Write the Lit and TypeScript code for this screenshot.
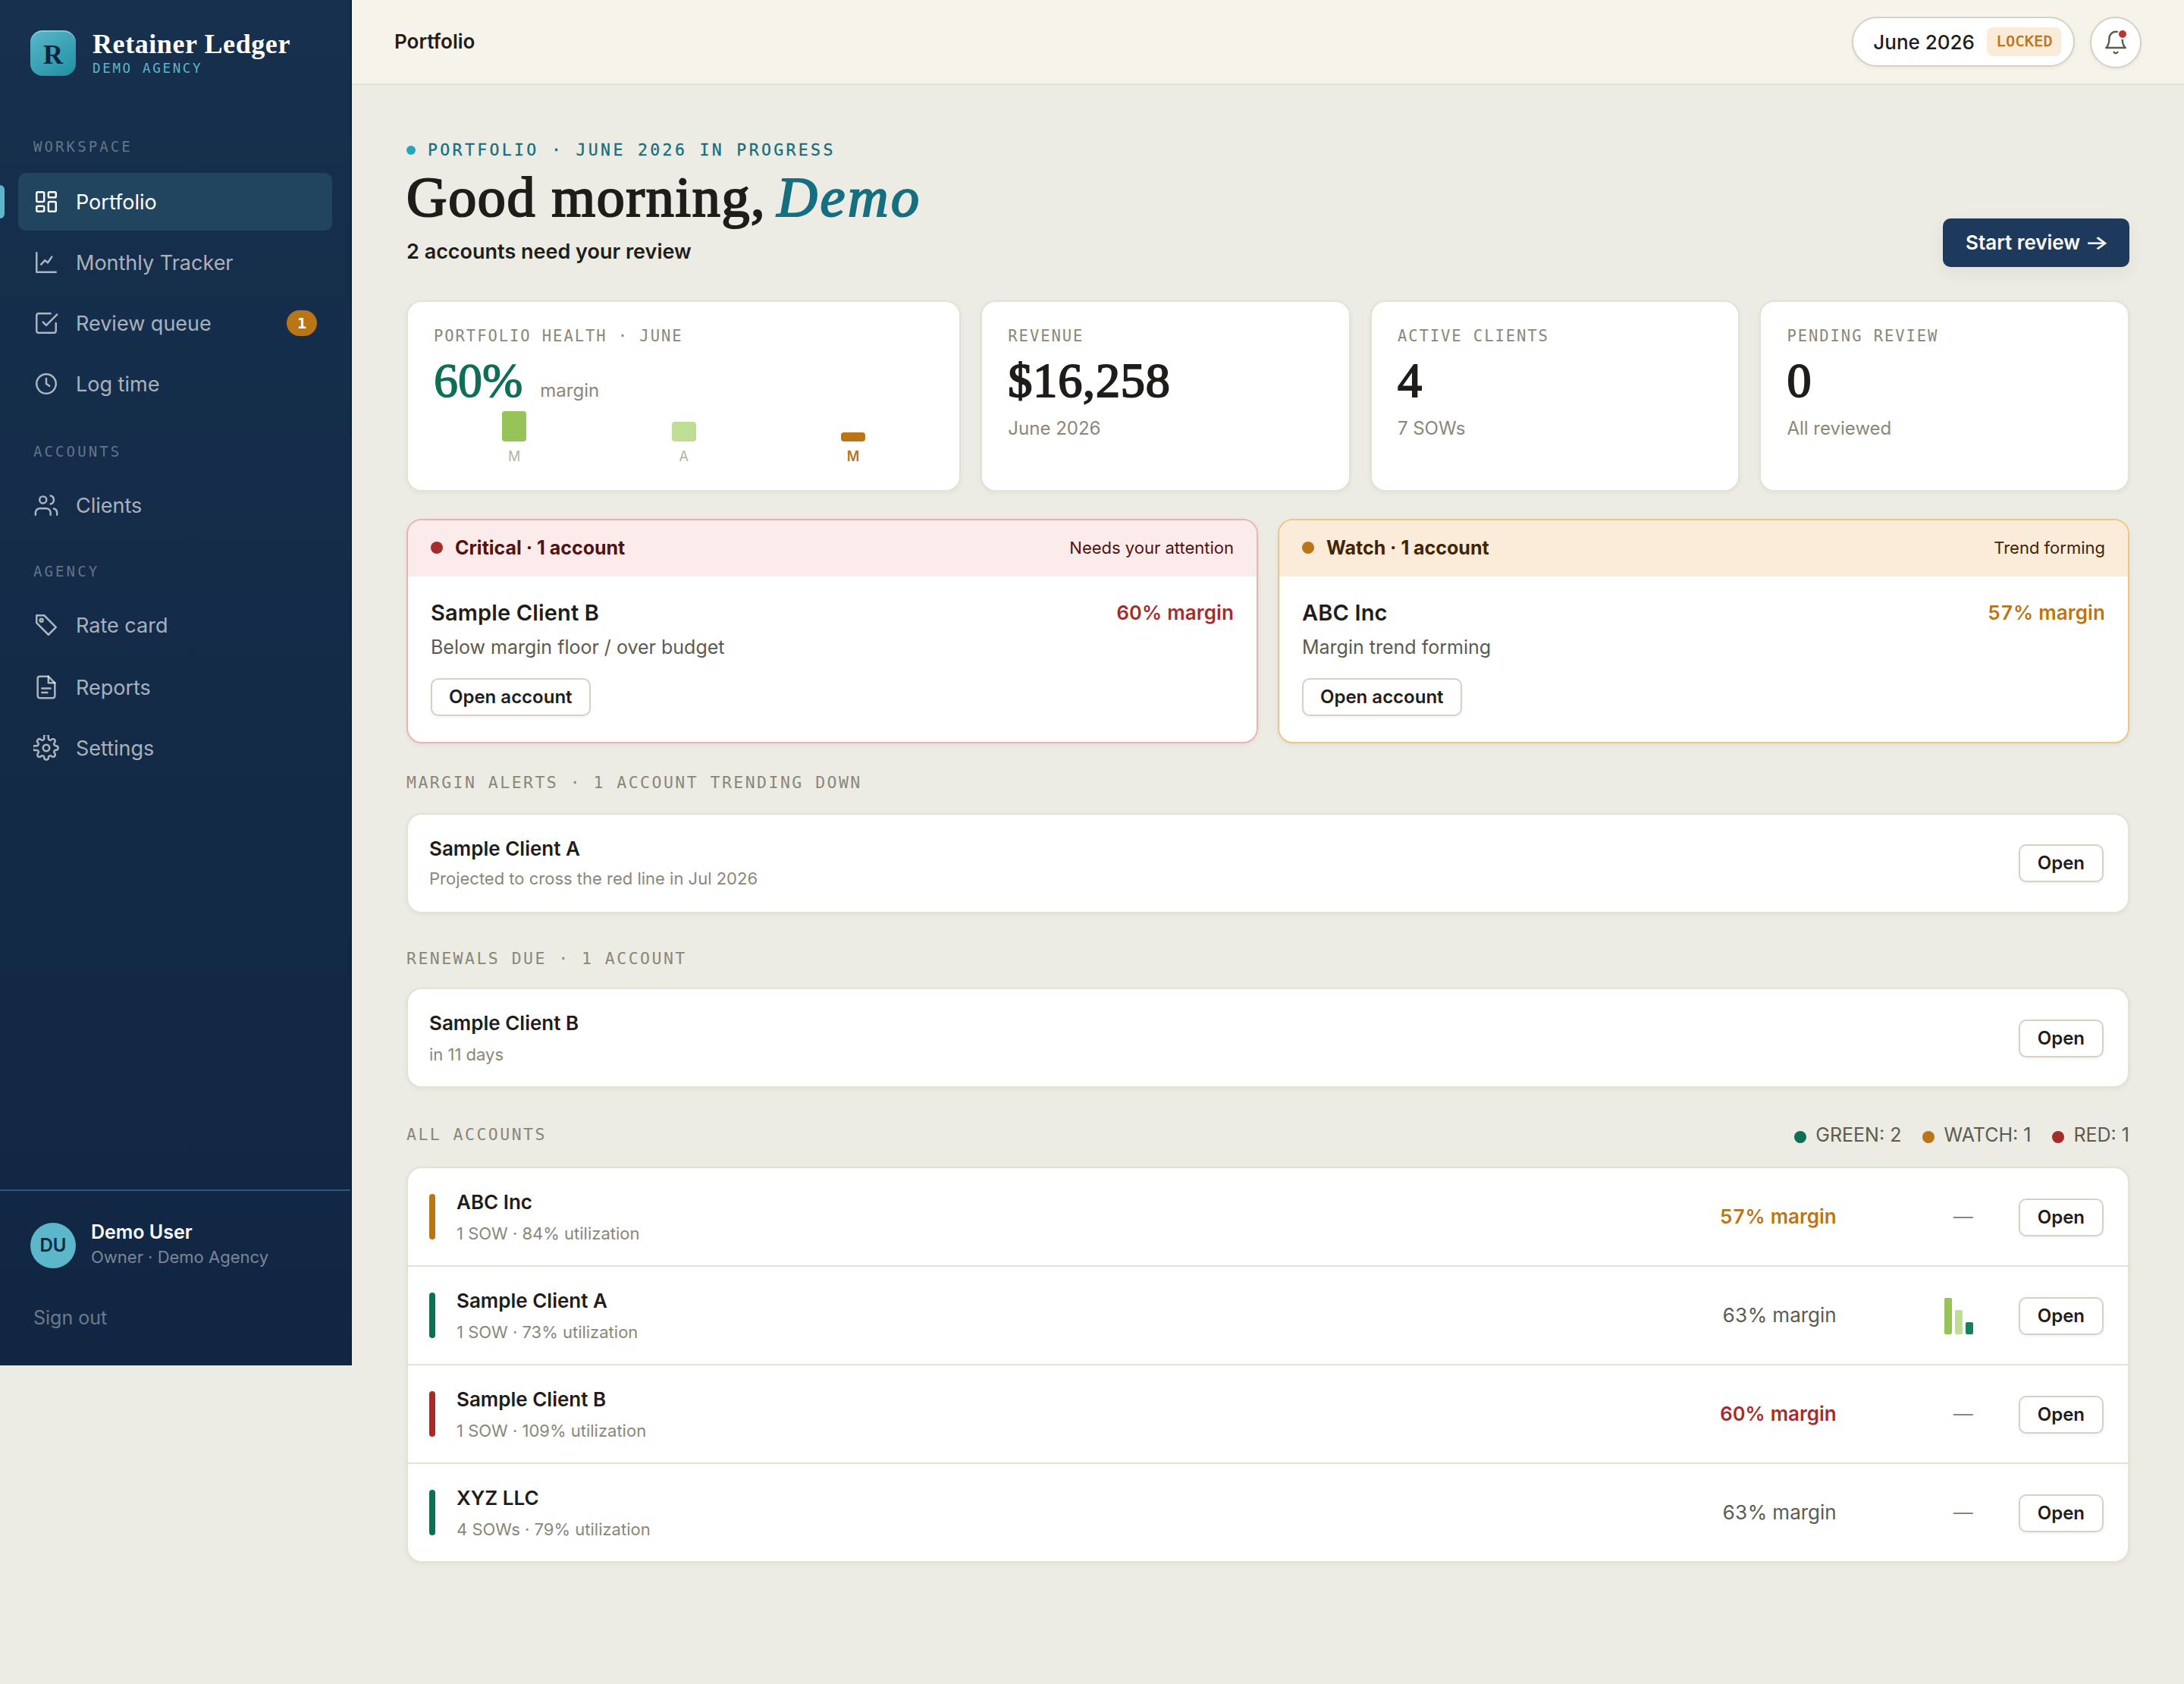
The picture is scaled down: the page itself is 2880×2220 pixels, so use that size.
import { LitElement, html, css, svg } from 'lit';
import { customElement, property } from 'lit/decorators.js';
import { classMap } from 'lit/directives/class-map.js';
import { styleMap } from 'lit/directives/style-map.js';

const icons: Record<string, unknown> = {
  dashboard: svg`
    <rect x="3" y="3" width="7" height="9" rx="1"/>
    <rect x="14" y="3" width="7" height="5" rx="1"/>
    <rect x="14" y="12" width="7" height="9" rx="1"/>
    <rect x="3" y="16" width="7" height="5" rx="1"/>`,
  chart: svg`
    <path d="M3 3v18h18"/>
    <path d="M7.2 13.8l3.6-3.8 2.6 2.2L17.2 6.8"/>`,
  check: svg`
    <path d="M9 11l3 3L22 4"/>
    <path d="M21 12v7a2 2 0 0 1-2 2H5a2 2 0 0 1-2-2V5a2 2 0 0 1 2-2h11"/>`,
  clock: svg`
    <circle cx="12" cy="12" r="9"/>
    <path d="M12 7v5l3 2"/>`,
  users: svg`
    <path d="M16 21v-2a4 4 0 0 0-4-4H6a4 4 0 0 0-4 4v2"/>
    <circle cx="9" cy="7" r="3.2"/>
    <path d="M22 21v-2a4 4 0 0 0-3-3.87"/>
    <path d="M16 3.13a4 4 0 0 1 0 7.75"/>`,
  tag: svg`
    <path d="M3 3h7l11 11-7 7L3 10z"/>
    <circle cx="7.5" cy="7.5" r="1.4"/>`,
  file: svg`
    <path d="M14 2H6a2 2 0 0 0-2 2v16a2 2 0 0 0 2 2h12a2 2 0 0 0 2-2V8z"/>
    <path d="M14 2v6h6"/>
    <path d="M8 13h8M8 17h5"/>`,
  gear: svg`
    <circle cx="12" cy="12" r="3"/>
    <path d="M19.4 15a1.65 1.65 0 0 0 .33 1.82l.06.06a2 2 0 1 1-2.83 2.83l-.06-.06a1.65 1.65 0 0 0-1.82-.33 1.65 1.65 0 0 0-1 1.51V21a2 2 0 0 1-4 0v-.09A1.65 1.65 0 0 0 9 19.4a1.65 1.65 0 0 0-1.82.33l-.06.06a2 2 0 1 1-2.83-2.83l.06-.06a1.65 1.65 0 0 0 .33-1.82 1.65 1.65 0 0 0-1.51-1H1.2a2 2 0 0 1 0-4h1.89A1.65 1.65 0 0 0 4.6 9a1.65 1.65 0 0 0-.33-1.82l-.06-.06a2 2 0 1 1 2.83-2.83l.06.06a1.65 1.65 0 0 0 1.82.33H9a1.65 1.65 0 0 0 1-1.51V1.2a2 2 0 0 1 4 0v1.89a1.65 1.65 0 0 0 1 1.51 1.65 1.65 0 0 0 1.82-.33l.06-.06a2 2 0 1 1 2.83 2.83l-.06.06a1.65 1.65 0 0 0-.33 1.82V9a1.65 1.65 0 0 0 1.51 1H21a2 2 0 0 1 0 4h-.09a1.65 1.65 0 0 0-1.51 1z"/>`,
  bell: svg`
    <path d="M6 8a6 6 0 0 1 12 0c0 7 3 9 3 9H3s3-2 3-9"/>
    <path d="M10.3 21a1.94 1.94 0 0 0 3.4 0"/>`,
};

const icon = (name: string) => html`
  <svg class="icon" viewBox="0 0 24 24" fill="none" stroke="currentColor" stroke-width="1.75"
    stroke-linecap="round" stroke-linejoin="round">${icons[name]}</svg>
`;

const base = css`
  :host {
    display: block;
    --serif: "Liberation Serif", "Times New Roman", serif;
    --mono: "DejaVu Sans Mono", monospace;
    --ink: #1e1d1a;
    --ink-2: #5c5b50;
    --ink-3: #8a877a;
    --line: #e4e1d5;
    --line-strong: #d5d2c4;
    --green: #0f6e56;
    --amber: #ba7517;
    --red: #a32d2d;
  }
  * {
    box-sizing: border-box;
  }
  .icon {
    display: block;
    flex: none;
    width: 34px;
    height: 34px;
  }
  .btn {
    display: inline-flex;
    align-items: center;
    justify-content: center;
    height: 50px;
    padding: 0 23px;
    border: 2px solid var(--line-strong);
    border-radius: 10px;
    background: #fff;
    box-shadow: 0 2px 4px rgba(30, 29, 26, 0.05);
    color: var(--ink);
    font: 600 24px/1 Inter, sans-serif;
    white-space: nowrap;
  }
`;

interface NavItem {
  label: string;
  icon: string;
  active?: boolean;
  badge?: number;
}

const nav: { title: string; items: NavItem[] }[] = [
  {
    title: 'WORKSPACE',
    items: [
      { label: 'Portfolio', icon: 'dashboard', active: true },
      { label: 'Monthly Tracker', icon: 'chart' },
      { label: 'Review queue', icon: 'check', badge: 1 },
      { label: 'Log time', icon: 'clock' },
    ],
  },
  { title: 'ACCOUNTS', items: [{ label: 'Clients', icon: 'users' }] },
  {
    title: 'AGENCY',
    items: [
      { label: 'Rate card', icon: 'tag' },
      { label: 'Reports', icon: 'file' },
      { label: 'Settings', icon: 'gear' },
    ],
  },
];

@customElement('ledger-sidebar')
class LedgerSidebar extends LitElement {
  static styles = [base, css`
    :host {
      display: flex;
      flex-direction: column;
      width: 464px;
      height: 1800px;
      border-right: 2px solid #0b2140;
      background: linear-gradient(180deg, #16304d, #112642);
      color: rgba(255, 255, 255, 0.65);
    }
    .brand {
      display: flex;
      gap: 22px;
      padding: 40px 40px 0;
    }
    .logo {
      display: flex;
      align-items: center;
      justify-content: center;
      width: 60px;
      height: 60px;
      border-radius: 16px;
      background: linear-gradient(145deg, #5bb7c9, #1f8fa3);
      box-shadow: inset 0 2px 0 rgba(255, 255, 255, 0.3);
      color: #0b2440;
      font: 700 36px/1 var(--serif);
      padding-top: 4px;
    }
    .name {
      color: #fff;
      font: 700 36px/36px var(--serif);
      letter-spacing: 0.58px;
    }
    .org {
      margin-top: 4px;
      color: #5bb7c9;
      font: 400 17.5px/20px var(--mono);
      letter-spacing: 2.67px;
    }
    .group {
      padding: 0 24px;
      margin-top: 26px;
    }
    .group:first-of-type {
      margin-top: 74px;
    }
    .group:first-of-type .title {
      padding-bottom: 20px;
    }
    .group:nth-of-type(2) {
      margin-top: 28px;
    }
    .title {
      padding: 4px 20px 18px;
      color: rgba(255, 255, 255, 0.35);
      font: 400 19px/30px var(--mono);
      letter-spacing: 3.1px;
    }
    .item {
      position: relative;
      display: flex;
      align-items: center;
      gap: 22px;
      height: 76px;
      margin-bottom: 4px;
      padding: 0 20px;
      border-radius: 10px;
      font-size: 27px;
    }
    .group:last-of-type .title + .item {
      margin-bottom: 6px;
    }
    .item.active {
      background: #21455f;
      color: #fff;
    }
    .item.active::before {
      content: "";
      position: absolute;
      left: -24px;
      top: 16px;
      width: 6px;
      height: 44px;
      border-radius: 0 6px 6px 0;
      background: #5bb7c9;
    }
    .badge {
      margin-left: auto;
      width: 40px;
      border-radius: 17px;
      background: var(--amber);
      color: #fff;
      font: 700 20px/34px var(--mono);
      text-align: center;
    }
    footer {
      margin-top: auto;
      height: 232px;
      padding: 38px 40px 0;
      border-top: 2px solid #2f557f;
    }
    .user {
      display: flex;
      gap: 20px;
    }
    .avatar {
      width: 60px;
      height: 60px;
      margin-top: 4px;
      border-radius: 50%;
      background: #5bb7c9;
      color: #0f2a44;
      font: 600 24px/60px Inter, sans-serif;
      text-align: center;
    }
    .who {
      color: #fff;
      font-size: 25px;
      font-weight: 600;
      line-height: 33px;
    }
    .role {
      color: rgba(255, 255, 255, 0.45);
      font-size: 22px;
      line-height: 33px;
    }
    .out {
      margin-top: 45px;
      padding-left: 4px;
      color: rgba(255, 255, 255, 0.4);
      font-size: 25px;
      line-height: 36px;
    }
  `];

  render() {
    return html`
      <header class="brand">
        <div class="logo">R</div>
        <div>
          <div class="name">Retainer Ledger</div>
          <div class="org">DEMO AGENCY</div>
        </div>
      </header>
      ${nav.map(group => html`
        <section class="group">
          <div class="title">${group.title}</div>
          ${group.items.map(item => html`
            <div class=${classMap({ item: true, active: !!item.active })}>
              ${icon(item.icon)}
              <span>${item.label}</span>
              ${item.badge ? html`<span class="badge">${item.badge}</span>` : ''}
            </div>
          `)}
        </section>
      `)}
      <footer>
        <div class="user">
          <div class="avatar">DU</div>
          <div>
            <div class="who">Demo User</div>
            <div class="role">Owner · Demo Agency</div>
          </div>
        </div>
        <div class="out">Sign out</div>
      </footer>
    `;
  }
}

@customElement('ledger-topbar')
class LedgerTopbar extends LitElement {
  static styles = [base, css`
    :host {
      display: flex;
      align-items: flex-start;
      gap: 20px;
      height: 112px;
      padding: 22px 56px 0;
      border-bottom: 2px solid var(--line);
      background: #f6f3eb;
    }
    .page {
      margin-right: auto;
      font-size: 26px;
      font-weight: 600;
      line-height: 65px;
    }
    .period {
      display: flex;
      align-items: center;
      gap: 16px;
      height: 66px;
      padding: 0 16px 0 26px;
      border: 2px solid var(--line-strong);
      border-radius: 33px;
      background: #fff;
      box-shadow: 0 2px 4px rgba(30, 29, 26, 0.06);
      font-size: 26px;
      font-weight: 500;
    }
    .chip {
      width: 98px;
      height: 38px;
      padding-left: 13px;
      border-radius: 8px;
      background: #faecd9;
      color: var(--amber);
      font: 400 19.5px/38px var(--mono);
      letter-spacing: 0.6px;
      -webkit-text-stroke: 0.6px currentColor;
    }
    .bell {
      position: relative;
      display: flex;
      align-items: center;
      justify-content: center;
      width: 68px;
      height: 68px;
      border: 2px solid var(--line-strong);
      border-radius: 50%;
      background: #fff;
      box-shadow: 0 2px 4px rgba(30, 29, 26, 0.06);
      color: var(--ink-2);
    }
    .dot {
      position: absolute;
      top: 14px;
      right: 16px;
      width: 14px;
      height: 14px;
      border: 2px solid #fff;
      border-radius: 50%;
      background: #c0352b;
    }
  `];

  render() {
    return html`
      <div class="page">Portfolio</div>
      <div class="period"><span>June 2026</span><span class="chip">LOCKED</span></div>
      <div class="bell">${icon('bell')}<span class="dot"></span></div>
    `;
  }
}

@customElement('stat-card')
class StatCard extends LitElement {
  @property() label = '';
  @property() value = '';
  @property() note = '';

  static styles = [base, css`
    :host {
      padding: 31px 34px 0;
      border: 2px solid var(--line);
      border-radius: 20px;
      background: #fff;
      box-shadow: 0 2px 6px rgba(30, 29, 26, 0.05);
    }
    .label {
      color: var(--ink-3);
      font: 400 20.5px/28px var(--mono);
      letter-spacing: 1.94px;
    }
    .value {
      margin-top: 13px;
      font: 400 64px/64px var(--serif);
      letter-spacing: 0.9px;
      -webkit-text-stroke: 2px currentColor;
    }
    .note {
      margin-top: 15px;
      color: var(--ink-3);
      font-size: 24px;
      line-height: 32px;
    }
  `];

  render() {
    return html`
      <div class="label">${this.label}</div>
      <div class="value">${this.value}</div>
      <div class="note">${this.note}</div>
    `;
  }
}

const months = [
  { label: 'M', height: 40, color: '#97c459' },
  { label: 'A', height: 26, color: '#c0dd97' },
  { label: 'M', height: 12, color: '#ba7517', current: true },
];

@customElement('health-card')
class HealthCard extends LitElement {
  static styles = [StatCard.styles, css`
    .line {
      display: flex;
      align-items: baseline;
      gap: 23px;
    }
    .line .value {
      color: var(--green);
      letter-spacing: 0;
      -webkit-text-stroke-width: 1.4px;
    }
    .unit {
      color: var(--ink-3);
      font-size: 24px;
    }
    .bars {
      display: grid;
      grid-template-columns: repeat(3, 1fr);
      gap: 11px;
      margin-top: 8px;
    }
    .month {
      display: flex;
      flex-direction: column;
      align-items: center;
      justify-content: flex-end;
      height: 72px;
      gap: 8px;
      color: #b4b2a4;
      font-size: 18px;
      line-height: 24px;
    }
    .month.current {
      color: var(--amber);
      font-weight: 600;
    }
    .bar {
      width: 32px;
      border-radius: 4px;
    }
  `];

  render() {
    return html`
      <div class="label">PORTFOLIO HEALTH · JUNE</div>
      <div class="line"><div class="value">60%</div><span class="unit">margin</span></div>
      <div class="bars">
        ${months.map(m => html`
          <div class=${classMap({ month: true, current: !!m.current })}>
            <div class="bar" style=${styleMap({ height: `${m.height}px`, background: m.color })}></div>
            ${m.label}
          </div>
        `)}
      </div>
    `;
  }
}

@customElement('alert-card')
class AlertCard extends LitElement {
  @property({ reflect: true }) tone = 'red';
  @property() heading = '';
  @property() hint = '';
  @property() client = '';
  @property() reason = '';
  @property() margin = '';

  static styles = [base, css`
    :host {
      --tone: var(--red);
      --fill: #fcebeb;
      --text: #501313;
      overflow: hidden;
      border: 2px solid #eeb1b1;
      border-radius: 20px;
      background: #fff;
      box-shadow: 0 2px 6px rgba(30, 29, 26, 0.06);
    }
    :host([tone="amber"]) {
      --tone: var(--amber);
      --fill: #faecd9;
      --text: #412402;
      border-color: #ebc787;
    }
    .head {
      display: flex;
      align-items: center;
      height: 74px;
      padding: 0 30px 2px;
      background: var(--fill);
      color: var(--text);
    }
    .dot {
      width: 16px;
      height: 16px;
      margin-right: 16px;
      border-radius: 50%;
      background: var(--tone);
    }
    .heading {
      margin-right: auto;
      font-size: 25px;
      font-weight: 700;
    }
    .hint {
      font-size: 22px;
    }
    .body {
      padding: 28px 30px 34px;
    }
    .row {
      display: flex;
      justify-content: space-between;
      line-height: 40px;
    }
    .client {
      font-size: 29px;
      font-weight: 600;
      letter-spacing: 0.15px;
    }
    .margin {
      color: var(--tone);
      font-size: 26px;
      font-weight: 600;
      letter-spacing: 0.1px;
      font-variant-numeric: tabular-nums;
    }
    .reason {
      margin: 7px 0 23px;
      color: var(--ink-2);
      font-size: 25px;
      line-height: 36px;
    }
    .btn {
      padding: 0 22px;
    }
  `];

  render() {
    return html`
      <div class="head">
        <span class="dot"></span>
        <span class="heading">${this.heading}</span>
        <span class="hint">${this.hint}</span>
      </div>
      <div class="body">
        <div class="row">
          <span class="client">${this.client}</span>
          <span class="margin">${this.margin}</span>
        </div>
        <div class="reason">${this.reason}</div>
        <span class="btn">Open account</span>
      </div>
    `;
  }
}

interface Account {
  name: string;
  detail: string;
  margin: string;
  status: 'green' | 'amber' | 'red';
  trend?: { height: number; color: string }[];
}

const accounts: Account[] = [
  { name: 'ABC Inc', detail: '1 SOW · 84% utilization', margin: '57% margin', status: 'amber' },
  {
    name: 'Sample Client A',
    detail: '1 SOW · 73% utilization',
    margin: '63% margin',
    status: 'green',
    trend: [
      { height: 48, color: '#97c459' },
      { height: 32, color: '#c0dd97' },
      { height: 16, color: '#17805f' },
    ],
  },
  { name: 'Sample Client B', detail: '1 SOW · 109% utilization', margin: '60% margin', status: 'red' },
  { name: 'XYZ LLC', detail: '4 SOWs · 79% utilization', margin: '63% margin', status: 'green' },
];

@customElement('app-root')
class AppRoot extends LitElement {
  static styles = [base, css`
    :host {
      display: flex;
      align-items: flex-start;
      min-height: 2220px;
      background: #edece4;
      color: var(--ink);
      font-family: Inter, sans-serif;
      font-size: 26px;
    }
    .page {
      flex: 1;
    }
    main {
      padding: 70px 72px 0;
    }
    .hero {
      display: flex;
      align-items: flex-end;
      justify-content: space-between;
      height: 170px;
    }
    .eyebrow {
      display: flex;
      align-items: center;
      gap: 16px;
      color: #156f80;
      font: 400 21.5px/32px var(--mono);
      letter-spacing: 3.35px;
      -webkit-text-stroke: 0.3px currentColor;
    }
    .eyebrow::before {
      content: "";
      width: 12px;
      height: 12px;
      border-radius: 50%;
      background: #2ba3bd;
    }
    h1 {
      margin: 4px 0 12px;
      font: 400 74px/84px var(--serif);
      letter-spacing: 1.7px;
      -webkit-text-stroke: 2.2px currentColor;
    }
    h1 em {
      margin-left: -6px;
      color: #156f80;
      letter-spacing: 3.6px;
    }
    .lede {
      padding-bottom: 2px;
      font-size: 27px;
      font-weight: 600;
      line-height: 36px;
    }
    .primary {
      width: 246px;
      height: 64px;
      padding: 0 30px;
      border-radius: 10px;
      background: #1d3a5c;
      box-shadow: 0 8px 24px rgba(30, 29, 26, 0.06);
      color: #fff;
      font-size: 26px;
      font-weight: 600;
      line-height: 64px;
      white-space: nowrap;
    }
    .arrow {
      display: inline-block;
      transform: scaleX(1.3);
      transform-origin: left;
      margin-left: -1px;
      font-weight: 500;
    }
    .stats {
      display: grid;
      grid-template-columns: 1.5fr 1fr 1fr 1fr;
      gap: 26px;
      height: 252px;
      margin-top: 44px;
    }
    .alerts {
      display: grid;
      grid-template-columns: 1fr 1fr;
      gap: 26px;
      margin-top: 36px;
    }
    .section {
      color: var(--ink-3);
      font: 400 21.5px/32px var(--mono);
      letter-spacing: 2.46px;
    }
    .trending .section {
      margin: 36px 0 24px;
    }
    .renewals .section {
      margin: 44px 0 22px;
    }
    .all {
      display: flex;
      justify-content: space-between;
      height: 32px;
      margin: 46px 0 26px;
    }
    .legend {
      display: flex;
      gap: 28px;
      color: var(--ink-2);
      font-size: 25px;
      line-height: 30px;
    }
    .legend span {
      display: flex;
      align-items: center;
      gap: 12px;
    }
    .legend span::before {
      content: "";
      width: 16px;
      height: 16px;
      margin-top: 5px;
      border-radius: 50%;
      background: var(--green);
    }
    .legend .amber::before {
      background: var(--amber);
    }
    .legend .red::before {
      background: var(--red);
    }
    .panel {
      border: 2px solid var(--line);
      border-radius: 20px;
      background: #fff;
      box-shadow: 0 2px 6px rgba(30, 29, 26, 0.05);
    }
    .row {
      display: flex;
      align-items: center;
      height: 128px;
      padding: 2px 32px 0 28px;
    }
    .row + .row {
      height: 130px;
      border-top: 2px solid var(--line);
    }
    .info {
      flex: 1;
      padding-bottom: 2px;
    }
    .client {
      font-size: 26px;
      font-weight: 600;
      line-height: 37px;
    }
    .detail {
      margin-top: 7px;
      color: var(--ink-3);
      font-size: 22px;
      line-height: 32px;
    }
    .trending .info {
      padding-bottom: 4px;
    }
    .trending .detail {
      margin-top: 5px;
    }
    .trending .btn {
      margin-bottom: 3px;
    }
    .status {
      width: 8px;
      height: 60px;
      margin: 0 28px 2px 0;
      border-radius: 4px;
      background: var(--green);
    }
    .status.amber {
      background: var(--amber);
    }
    .status.red {
      background: var(--red);
    }
    .margin {
      padding-bottom: 4px;
      color: var(--ink-2);
      font-size: 26px;
      font-variant-numeric: tabular-nums;
    }
    .margin.amber {
      color: var(--amber);
      font-weight: 600;
    }
    .margin.red {
      color: var(--red);
      font-weight: 600;
    }
    .trend {
      display: flex;
      align-items: flex-end;
      justify-content: flex-end;
      gap: 4px;
      width: 180px;
      margin-right: 60px;
      color: var(--ink-3);
    }
    .trend .dash {
      padding-bottom: 4px;
    }
    .trend i {
      width: 10px;
      border-radius: 2px;
    }
  `];

  render() {
    return html`
      <ledger-sidebar></ledger-sidebar>
      <div class="page">
        <ledger-topbar></ledger-topbar>
        <main>
          <div class="hero">
            <div>
              <div class="eyebrow">PORTFOLIO · JUNE 2026 IN PROGRESS</div>
              <h1>Good morning, <em>Demo</em></h1>
              <div class="lede">2 accounts need your review</div>
            </div>
            <div class="primary">Start review <span class="arrow">→</span></div>
          </div>

          <div class="stats">
            <health-card></health-card>
            <stat-card label="REVENUE" value="$16,258" note="June 2026"></stat-card>
            <stat-card label="ACTIVE CLIENTS" value="4" note="7 SOWs"></stat-card>
            <stat-card label="PENDING REVIEW" value="0" note="All reviewed"></stat-card>
          </div>

          <div class="alerts">
            <alert-card tone="red" heading="Critical · 1 account" hint="Needs your attention"
              client="Sample Client B" reason="Below margin floor / over budget" margin="60% margin"></alert-card>
            <alert-card tone="amber" heading="Watch · 1 account" hint="Trend forming"
              client="ABC Inc" reason="Margin trend forming" margin="57% margin"></alert-card>
          </div>

          <section class="trending">
            <div class="section">MARGIN ALERTS · 1 ACCOUNT TRENDING DOWN</div>
            <div class="panel">
              <div class="row">
                <div class="info">
                  <div class="client">Sample Client A</div>
                  <div class="detail">Projected to cross the red line in Jul 2026</div>
                </div>
                <span class="btn">Open</span>
              </div>
            </div>
          </section>

          <section class="renewals">
            <div class="section">RENEWALS DUE · 1 ACCOUNT</div>
            <div class="panel">
              <div class="row">
                <div class="info">
                  <div class="client">Sample Client B</div>
                  <div class="detail">in 11 days</div>
                </div>
                <span class="btn">Open</span>
              </div>
            </div>
          </section>

          <div class="all">
            <div class="section">ALL ACCOUNTS</div>
            <div class="legend">
              <span>GREEN: 2</span>
              <span class="amber">WATCH: 1</span>
              <span class="red">RED: 1</span>
            </div>
          </div>
          <div class="panel">
            ${accounts.map(a => html`
              <div class="row">
                <div class="status ${a.status}"></div>
                <div class="info">
                  <div class="client">${a.name}</div>
                  <div class="detail">${a.detail}</div>
                </div>
                <div class="margin ${a.status}">${a.margin}</div>
                <div class="trend">
                  ${a.trend
                    ? a.trend.map(t => html`<i style=${styleMap({ height: `${t.height}px`, background: t.color })}></i>`)
                    : html`<span class="dash">—</span>`}
                </div>
                <span class="btn">Open</span>
              </div>
            `)}
          </div>
        </main>
      </div>
    `;
  }
}
